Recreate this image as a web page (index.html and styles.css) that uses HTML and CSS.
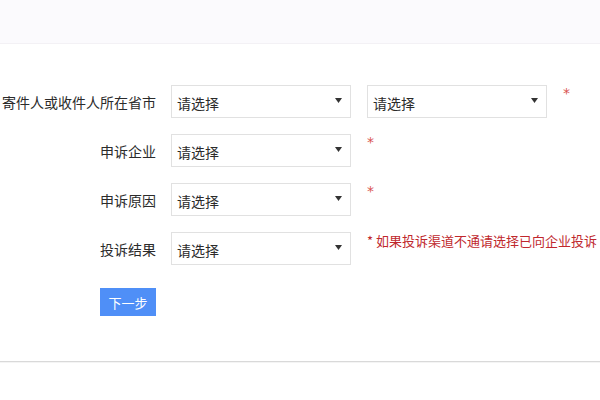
FILE: index.html
```html
<!DOCTYPE html>
<html lang="zh-CN">
<head>
<meta charset="utf-8">
<link rel="stylesheet" href="styles.css">
</head>
<body>
<div class="topbar"></div>
<div class="form">
  <div class="row">
    <div class="label">寄件人或收件人所在省市</div>
    <div class="select"><span>请选择</span><svg class="arrow" width="7" height="5" viewBox="0 0 7 5"><path d="M0 0H7L3.5 5Z"/></svg></div>
    <div class="select second"><span>请选择</span><svg class="arrow" width="7" height="5" viewBox="0 0 7 5"><path d="M0 0H7L3.5 5Z"/></svg></div>
    <div class="star">*</div>
  </div>
  <div class="row">
    <div class="label">申诉企业</div>
    <div class="select"><span>请选择</span><svg class="arrow" width="7" height="5" viewBox="0 0 7 5"><path d="M0 0H7L3.5 5Z"/></svg></div>
    <div class="star">*</div>
  </div>
  <div class="row">
    <div class="label">申诉原因</div>
    <div class="select"><span>请选择</span><svg class="arrow" width="7" height="5" viewBox="0 0 7 5"><path d="M0 0H7L3.5 5Z"/></svg></div>
    <div class="star">*</div>
  </div>
  <div class="row">
    <div class="label">投诉结果</div>
    <div class="select"><span>请选择</span><svg class="arrow" width="7" height="5" viewBox="0 0 7 5"><path d="M0 0H7L3.5 5Z"/></svg></div>
    <div class="hint">* 如果投诉渠道不通请选择已向企业投诉</div>
  </div>
  <div class="actions">
    <button class="btn">下一步</button>
  </div>
</div>
<div class="divider"></div>
</body>
</html>
```

FILE: styles.css
```css
* { box-sizing: border-box; }
html, body { margin: 0; padding: 0; background: #ffffff; }
body {
  font-family: "Noto Sans CJK SC", "Microsoft YaHei", sans-serif;
  color: #333333;
  width: 600px;
  height: 400px;
  overflow: hidden;
}
.topbar {
  height: 44px;
  background: #fbfafd;
  border-bottom: 1px solid #f3f1f5;
}
.form {
  padding-top: 41px;
}
.row {
  display: flex;
  align-items: center;
  height: 33px;
  margin-bottom: 16px;
  white-space: nowrap;
}
.label {
  width: 156px;
  margin-right: 15px;
  text-align: right;
  font-size: 14px;
  line-height: 20px;
  color: #2b2b2b;
}
.select {
  width: 180px;
  height: 33px;
  border: 1px solid #e1e1e1;
  display: flex;
  align-items: center;
  justify-content: space-between;
  padding: 0 8px 0 5px;
  font-size: 14px;
  color: #2b2b2b;
  background: #fff;
}
.select span { line-height: 20px; padding-top: 2px; }
.select.second { margin-left: 16px; }
.arrow { fill: #333; margin-top: -2px; }
.star {
  align-self: flex-start;
  margin-left: 16px;
  font-family: "DejaVu Sans", sans-serif;
  font-size: 14px;
  line-height: 16px;
  color: #d9534f;
  margin-top: 0;
}
.hint {
  align-self: flex-start;
  margin-left: 16px;
  font-size: 13px;
  line-height: 18px;
  color: #c0282d;
}
.actions {
  padding-top: 7px;
  padding-left: 100px;
}
.btn {
  width: 56px;
  height: 28px;
  border: none;
  background: #4f8ff7;
  color: #fff;
  font-family: "Noto Sans CJK SC", sans-serif;
  font-size: 13px;
  padding: 0;
  display: block;
}
.divider {
  margin-top: 45px;
  border-top: 1px solid #d9d9d9;
  border-bottom: 1px solid #f4f4f4;
}
```
